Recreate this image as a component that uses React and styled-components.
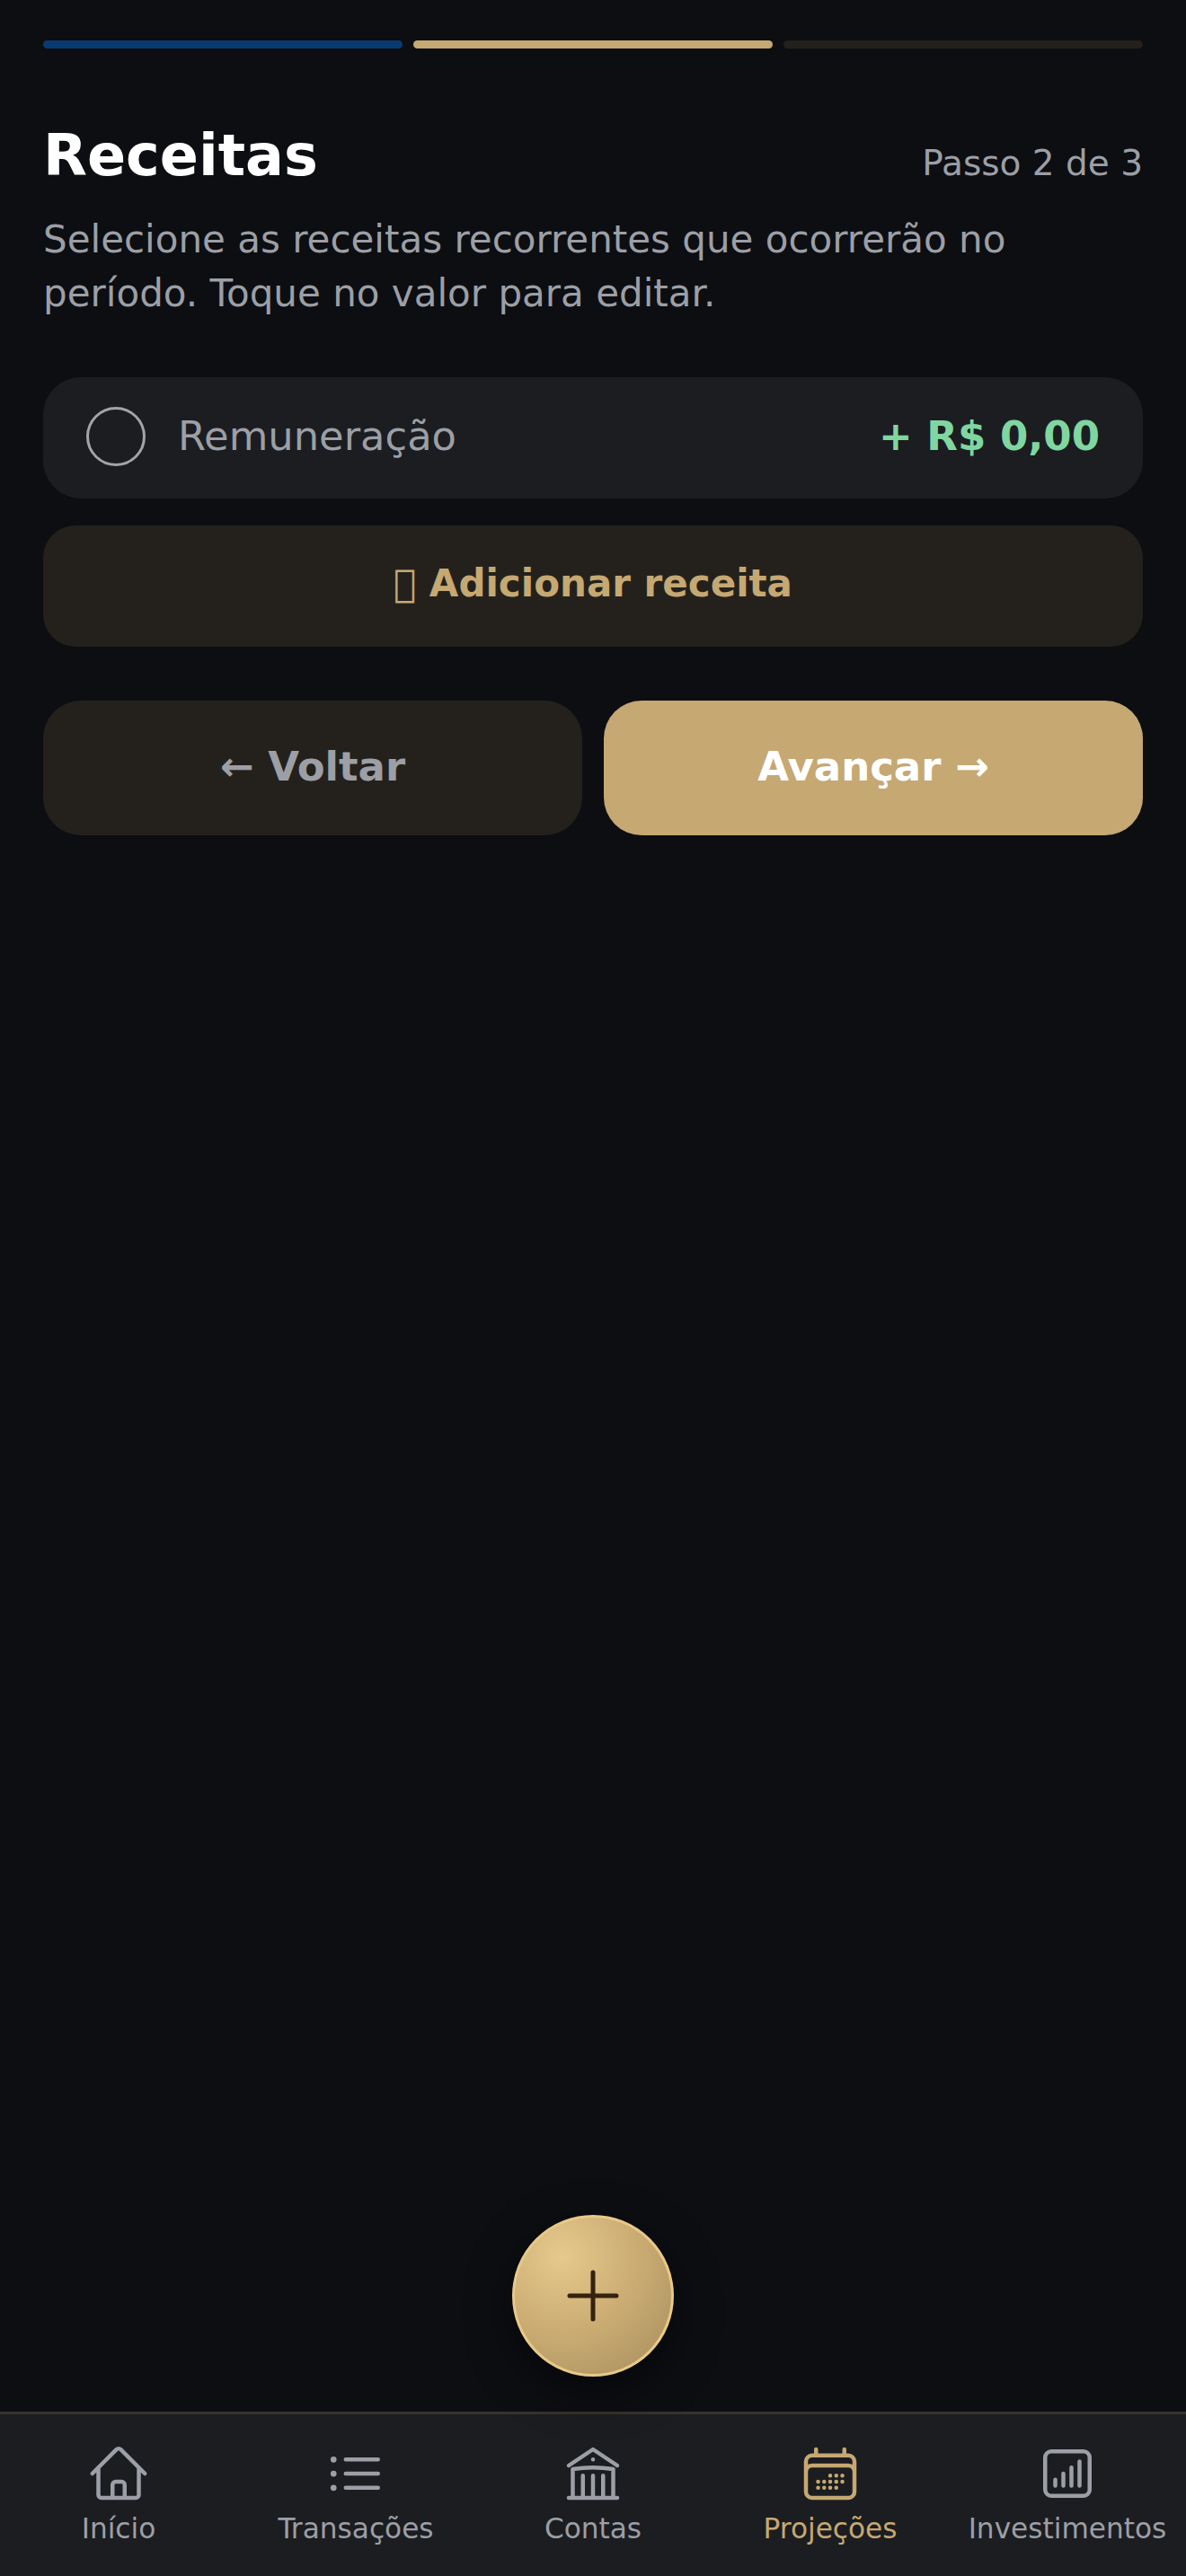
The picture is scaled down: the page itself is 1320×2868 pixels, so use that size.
import React from "react";
import styled, { createGlobalStyle } from "styled-components";
import {
  HiOutlineHome,
  HiOutlineListBullet,
  HiOutlineBuildingLibrary,
  HiOutlineCalendarDays,
  HiOutlineChartBarSquare,
} from "react-icons/hi2";

const Global = createGlobalStyle`
  html, body { margin: 0; padding: 0; background: #0c0e12; }
  * { box-sizing: border-box; }
  body { font-family: "DejaVu Sans", sans-serif; }
`;

const Page = styled.div`
  position: relative;
  width: 1320px;
  height: 2868px;
  display: flex;
  flex-direction: column;
  background: #0c0e12;
`;
const Main = styled.main`
  flex: 1;
  padding: 45px 48px 0;
`;
const Steps = styled.div`
  display: grid;
  grid-template-columns: 1fr 1fr 1fr;
  gap: 12px;
`;
const Step = styled.div`
  height: 9px;
  border-radius: 5px;
  background: ${(p) => p.$color};
`;
const Header = styled.div`
  display: flex;
  justify-content: space-between;
  align-items: baseline;
  margin-top: 81px;
`;
const Title = styled.h1`
  margin: 0;
  font-size: 63.6px;
  line-height: 76px;
  font-weight: 700;
  color: #fff;
`;
const StepLabel = styled.span`
  font-size: 39px;
  color: #9c9fa5;
`;
const Description = styled.p`
  margin: 26px 0 0;
  font-size: 42px;
  line-height: 60px;
  color: #9c9fa5;
`;
const Row = styled.div`
  display: flex;
  align-items: center;
  height: 135px;
  margin-top: 63px;
  padding: 0 48px 4px;
  border-radius: 42px;
  background: #1b1d21;
`;
const Radio = styled.span`
  width: 66px;
  height: 66px;
  border-radius: 50%;
  border: 3px solid #a3a4a6;
  flex: none;
`;
const RowLabel = styled.span`
  flex: 1;
  margin-left: 36px;
  font-size: 44.8px;
  color: #9c9fa5;
`;
const Amount = styled.span`
  font-size: 45px;
  font-weight: 700;
  color: #80d6a0;
`;
const AddButton = styled.button`
  display: block;
  width: 100%;
  height: 135px;
  margin-top: 30px;
  padding: 0 0 6px;
  border: 0;
  border-radius: 36px;
  background: #24211c;
  color: #c5a872;
  font: 700 42px "DejaVu Sans", sans-serif;
`;
const Actions = styled.div`
  display: grid;
  grid-template-columns: 1fr 1fr;
  gap: 24px;
  margin-top: 60px;
`;
const ActionButton = styled.button`
  height: 150px;
  padding: 0 0 3px;
  border: 0;
  border-radius: 42px;
  background: ${(p) => (p.$primary ? "#c5a872" : "#24211c")};
  color: ${(p) => (p.$primary ? "#fff" : "#9c9fa5")};
  font: 700 45px "DejaVu Sans", sans-serif;
`;
const Fab = styled.button`
  position: absolute;
  left: 570px;
  top: 2466px;
  width: 180px;
  height: 180px;
  padding: 0;
  display: flex;
  align-items: center;
  justify-content: center;
  border-radius: 50%;
  border: 3px solid #e8c987;
  background: radial-gradient(circle at 30% 25%, #e6c98c 0%, #c9ab72 50%, #a68c5c 100%);
  box-shadow: 0 16px 48px rgba(0, 0, 0, 0.5);
`;
const Nav = styled.nav`
  display: grid;
  grid-template-columns: repeat(5, 1fr);
  height: 183px;
  border-top: 3px solid #37332b;
  background: #1b1d21;
`;
const NavItem = styled.div`
  display: flex;
  flex-direction: column;
  align-items: center;
  padding-top: 30px;
  white-space: nowrap;
  color: ${(p) => (p.$active ? "#c5a872" : "#9c9fa5")};
`;
const NavLabel = styled.span`
  margin-top: 5px;
  font-size: 31.2px;
  line-height: 40px;
`;

const items = [
  ["Início", HiOutlineHome],
  ["Transações", HiOutlineListBullet],
  ["Contas", HiOutlineBuildingLibrary],
  ["Projeções", HiOutlineCalendarDays, true],
  ["Investimentos", HiOutlineChartBarSquare],
];

export default function App() {
  return (
    <Page>
      <Global />
      <Main>
        <Steps>
          <Step $color="#083a72" />
          <Step $color="#c5a872" />
          <Step $color="#24211c" />
        </Steps>
        <Header>
          <Title>Receitas</Title>
          <StepLabel>Passo 2 de 3</StepLabel>
        </Header>
        <Description>
          Selecione as receitas recorrentes que ocorrerão no período. Toque no valor para editar.
        </Description>
        <Row>
          <Radio />
          <RowLabel>Remuneração</RowLabel>
          <Amount>+ R$ 0,00</Amount>
        </Row>
        <AddButton>{"\uE000"} Adicionar receita</AddButton>
        <Actions>
          <ActionButton>← Voltar</ActionButton>
          <ActionButton $primary>Avançar →</ActionButton>
        </Actions>
      </Main>
      <Fab aria-label="Adicionar">
        <svg width="60" height="60" viewBox="0 0 60 60" fill="none" stroke="#33230f" strokeWidth="5" strokeLinecap="round">
          <path d="M30 4v52M4 30h52" />
        </svg>
      </Fab>
      <Nav>
        {items.map(([label, Icon, active]) => (
          <NavItem key={label} $active={active}>
            <Icon size={72} />
            <NavLabel>{label}</NavLabel>
          </NavItem>
        ))}
      </Nav>
    </Page>
  );
}
